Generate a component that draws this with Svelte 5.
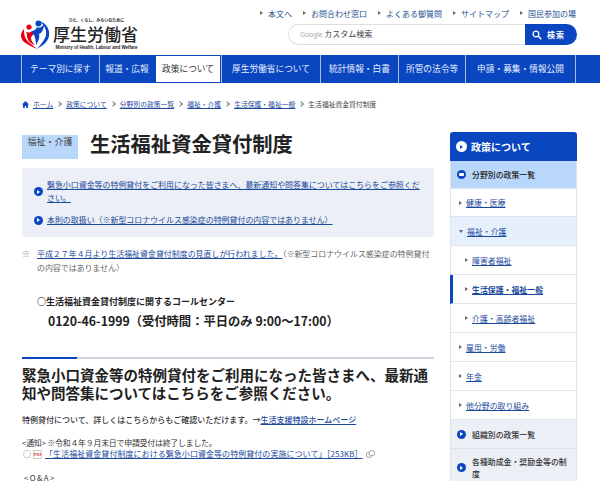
<script>
  const utils = ['本文へ','お問合わせ窓口','よくある御質問','サイトマップ','国民参加の場'];
  const nav = [['テーマ別に探す',78],['報道・広報',55],['政策について',67],['厚生労働省について',99],['統計情報・白書',78],['所管の法令等',67],['申請・募集・情報公開',111]];
  const crumbs = ['政策について','分野別の政策一覧','福祉・介護','生活保護・福祉一般'];
</script>

<div class="page">
  <header class="head">
    <div class="logo">
      <svg class="mark" viewBox="18 15 36 36" width="36" height="36" aria-hidden="true">
        <path d="M24 29 C20 33 20 38 24 42 C28 45 33 47 37 49 C33 45 27 42 25 37 C24 34 24 32 24 29Z" fill="#e60012"/>
        <path d="M26 32 C29 33 32 32 35 30 L35 33 C33 35 31 36 31 38 C31 41 33 43 35 45 C31 44 28 41 27 37 C27 35 27 34 26 32Z" fill="#e60012"/>
        <circle cx="29" cy="27" r="2.600" fill="#e60012"/>
        <path d="M40 21 C47 24 50 30 49 36 C48 42 42 46 37 49 C41 44 45 40 46 35 C47 30 44 25 40 21Z" fill="#0a46c0"/>
        <path d="M31 31 C35 31 36 29 37 27 C39 29 42 27 44 24 C44 29 42 33 39 34 C40 38 38 42 36 45 C36 40 35 35 31 31Z" fill="#0a46c0"/>
        <circle cx="38.500" cy="23.500" r="3" fill="#0a46c0"/>
      </svg>
      <div class="logotext">
        <span class="tagline">ひと、くらし、みらいのために</span>
        <span class="kanji">厚生労働省</span>
        <span class="en">Ministry of Health, Labour and Welfare</span>
      </div>
    </div>
    <div class="tools">
      <ul class="util">
        {#each utils as u}<li><i class="tri small"></i>{u}</li>{/each}
      </ul>
      <div class="search">
        <div class="field"><span class="google">Google</span> カスタム検索</div>
        <div class="btn">
          <svg viewBox="0 0 14 14" width="10" height="10" aria-hidden="true"><circle cx="5.500" cy="5.500" r="4" fill="none" stroke="#fff" stroke-width="1.800"/><path d="M8.500 8.500 L13 13" stroke="#fff" stroke-width="2"/></svg>
          <span>検索</span>
        </div>
      </div>
    </div>
  </header>

  <nav class="nav">
    <ul>
      {#each nav as [t,w]}
        <li class:active={t==='政策について'} style="width:{w}px">{t}</li>
      {/each}
    </ul>
  </nav>

  <div class="crumbs">
    <svg viewBox="0 0 10 10" width="7" height="7" aria-hidden="true"><path d="M5 0 L10 5 H8.500 V10 H6 V7 H4 V10 H1.500 V5 H0Z" fill="#0a46c0"/></svg>
    <a href="#a">ホーム</a>
    {#each crumbs as c}<span class="gt"></span><a href="#a">{c}</a>{/each}
    <span class="gt"></span><span>生活福祉資金貸付制度</span>
  </div>

  <div class="cols">
    <main class="main">
      <div class="titlerow">
        <span class="tag">福祉・介護</span>
        <h1>生活福祉資金貸付制度</h1>
      </div>
      <div class="notice">
        <div class="nrow"><i class="dot"></i><a href="#a">緊急小口資金等の特例貸付をご利用になった皆さまへ、最新通知や問答集についてはこちらをご参照ください。</a></div>
        <div class="nrow"><i class="dot"></i><a href="#a">本則の取扱い（※新型コロナウイルス感染症の特例貸付の内容ではありません）</a></div>
      </div>
      <p class="kome"><span class="mk">※</span><span><a href="#a">平成２７年４月より生活福祉資金貸付制度の見直しが行われました。</a>（※新型コロナウイルス感染症の特例貸付の内容ではありません）</span></p>
      <p class="call1">○生活福祉資金貸付制度に関するコールセンター</p>
      <p class="call2">0120-46-1999（受付時間：平日のみ 9:00～17:00）</p>
      <h2>緊急小口資金等の特例貸付をご利用になった皆さまへ、最新通知や問答集についてはこちらをご参照ください。</h2>
      <p class="body1">特例貸付について、詳しくはこちらからもご確認いただけます。→<a href="#a">生活支援特設ホームページ</a></p>
      <p class="body2">&lt;通知&gt; ※令和４年９月末日で申請受付は終了しました。</p>
      <p class="body3"><span class="circ">○</span><span class="pdf">PDF</span><a href="#a">「生活福祉資金貸付制度における緊急小口資金等の特例貸付の実施について」［253KB］</a>
        <svg viewBox="0 0 10 10" width="9" height="9" aria-hidden="true"><rect x="0.500" y="3" width="6" height="5" rx="1.500" fill="none" stroke="#999"/><rect x="3.500" y="1" width="6" height="5" rx="1.500" fill="#fff" stroke="#999"/></svg></p>
      <p class="body4">&lt;Q&amp;A&gt;</p>
    </main>

    <aside class="side">
      <div class="shead"><i class="dot white"></i>政策について</div>
      <div class="sgroup"><i class="dot down"></i>分野別の政策一覧</div>
      <div class="sitem"><i class="tri"></i><a href="#a">健康・医療</a></div>
      <div class="sitem open"><i class="tri dn"></i><a href="#a">福祉・介護</a></div>
      <div class="sitem sub"><i class="tri"></i><a href="#a">障害者福祉</a></div>
      <div class="sitem sub cur"><i class="tri"></i><a href="#a">生活保護・福祉一般</a></div>
      <div class="sitem sub"><i class="tri"></i><a href="#a">介護・高齢者福祉</a></div>
      <div class="sitem"><i class="tri"></i><a href="#a">雇用・労働</a></div>
      <div class="sitem"><i class="tri"></i><a href="#a">年金</a></div>
      <div class="sitem"><i class="tri"></i><a href="#a">他分野の取り組み</a></div>
      <div class="sgrey"><i class="dot"></i>組織別の政策一覧</div>
      <div class="sgrey two"><i class="dot"></i><span>各種助成金・奨励金等の制度</span></div>
    </aside>
  </div>
</div>

<style>
  :global(body) { margin: 0; background: #fff; overflow: hidden; }
  .page { width: 600px; height: 481px; overflow: hidden; font-family: "Noto Sans CJK JP", "Noto Sans", sans-serif; color: #333; font-size: 8px; }
  a { color: #1a4a9c; text-decoration: underline; }
  ul { list-style: none; margin: 0; padding: 0; }
  p, h1, h2 { margin: 0; }
  i { display: block; flex: none; }

  .head { height: 55px; display: flex; justify-content: space-between; padding: 0 23px 0 18px; box-sizing: border-box; }
  .logo { display: flex; align-items: flex-start; padding-top: 15px; box-sizing: border-box; }
  .logotext { display: flex; flex-direction: column; align-items: center; color: #222; margin-left: -1px; margin-top: 3px; }
  .tagline { font-size: 4px; line-height: 5px; font-weight: 700; }
  .kanji { font-size: 17px; line-height: 21px; font-weight: 500; white-space: nowrap; margin-right: 2px; }
  .en { font-size: 4.500px; line-height: 7px; font-family: "Liberation Sans", sans-serif; font-weight: 700; white-space: nowrap; }
  .tools { display: flex; flex-direction: column; align-items: flex-end; }
  .util { display: flex; gap: 11px; height: 24px; align-items: center; padding: 0 1px 0 0; box-sizing: border-box; color: #25508f; font-size: 8px; white-space: nowrap; }
  .util li { display: flex; align-items: center; gap: 5px; margin-top: 2px; }
  .tri { width: 0; height: 0; border-left: 3px solid #666; border-top: 2px solid transparent; border-bottom: 2px solid transparent; }
  .tri.dn { border-top: 3px solid #666; border-left: 2px solid transparent; border-right: 2px solid transparent; border-bottom: 0; }
  .search { display: flex; width: 289px; height: 21px; }
  .field { flex: 1; border: 1px solid #dcdfe6; border-right: 0; border-radius: 11px 0 0 11px; line-height: 18px; padding-left: 11px; font-size: 8px; color: #444; }
  .google { font-family: "Liberation Sans", sans-serif; font-size: 7px; color: #aaa; }
  .btn { width: 52px; background: #0a46c0; border-radius: 0 11px 11px 0; display: flex; align-items: center; gap: 5px; padding-left: 7px; box-sizing: border-box; color: #fff; font-size: 8px; font-weight: 700; letter-spacing: 1px; }

  .nav { background: #0a46c0; height: 28px; }
  .nav ul { display: flex; height: 100%; padding-left: 21px; }
  .nav li { box-sizing: border-box; border-left: 1px solid #a9bfe8; color: #e8eeff; font-size: 8.700px; line-height: 28px; text-align: center; white-space: nowrap; }
  .nav li:last-child { border-right: 1px solid #a9bfe8; }
  .nav li.active { background: #fff; color: #333; border: 1px solid #0a46c0; border-width: 1px 1px 1px 2px; line-height: 26px; }

  .crumbs { display: flex; align-items: center; gap: 4px; padding: 15px 0 0 22px; height: 12px; font-size: 6.800px; color: #444; white-space: nowrap; }
  .gt { width: 3px; height: 3px; border: solid #777; border-width: 1px 1px 0 0; transform: rotate(45deg); margin: 0 1px 0 0; }

  .cols { display: flex; padding: 25px 0 0 22px; gap: 16px; }
  .main { width: 412px; flex: none; }
  .titlerow { display: flex; align-items: flex-start; gap: 12px; height: 33px; }
  .tag { width: 56px; height: 24px; background: #b9d6fb; font-size: 9px; line-height: 13px; text-align: center; color: #444; }
  h1 { font-size: 20.300px; line-height: 22px; margin-top: -3px; font-weight: 700; color: #222; }
  .notice { background: #eceff5; border-radius: 3px; height: 69px; box-sizing: border-box; padding: 11px 12px 0 12px; font-size: 7.950px; line-height: 12.500px; }
  .nrow { display: flex; align-items: center; gap: 4px; margin-bottom: 11px; }
  .nrow:last-child { margin-top: -1px; }
  .dot { width: 9px; height: 9px; border-radius: 50%; background: #0a46c0; position: relative; }
  .dot::after { content: ""; position: absolute; left: 3px; top: 2.500px; width: 3px; height: 4px; border-left: 3px solid #fff; border-top: 2px solid transparent; border-bottom: 2px solid transparent; box-sizing: border-box; }
  .dot.white { background: #fff; width: 11px; height: 11px; }
  .dot.white::after { border-left-color: #0a46c0; left: 4px; top: 3.500px; }
  .dot.down::after { border: 0; width: 5px; height: 3px; background: #fff; left: 2px; top: 3px; border-radius: 1px; }
  .kome { display: flex; margin-top: 10px; font-size: 7.950px; line-height: 13.500px; color: #666; }
  .mk { width: 15px; flex: none; color: #7a8fb0; }
  .call1 { margin: 20px 0 0 15px; font-size: 9px; font-weight: 700; line-height: 15px; color: #222; }
  .call2 { margin: 2px 0 0 26px; font-size: 12.300px; font-weight: 700; line-height: 20px; color: #222; }
  h2 { margin-top: 26px; padding-top: 7px; border-top: 2px solid; border-image: linear-gradient(90deg, #0a46c0 56px, #cfd3dc 56px) 1; font-size: 14.500px; line-height: 18px; font-weight: 700; color: #222; }
  .body1 { margin-top: 11px; line-height: 14px; font-size: 8px; color: #333; font-weight: 500; }
  .body2 { margin-top: 10px; line-height: 11px; font-size: 7.900px; color: #333; letter-spacing: -0.200px; }
  .body3 { line-height: 12px; font-size: 8px; display: flex; align-items: center; white-space: nowrap; letter-spacing: 0.050px; }
  .circ { width: 10px; flex: none; color: #555; padding-left: 1px; box-sizing: border-box; }
  .pdf { width: 9px; height: 9px; border: 1px solid #ccc; box-sizing: border-box; font: 700 4px/7px "Liberation Sans", sans-serif; color: #d33; text-align: center; margin: 0 3px 0 1px; overflow: hidden; }
  .body3 svg { margin-left: 3px; }
  .body4 { margin-top: 12px; line-height: 12px; font-size: 7.900px; margin-left: 2px; letter-spacing: 1.400px; }

  .side { width: 127px; flex: none; margin-top: -3px; font-size: 8px; }
  .side > div { display: flex; align-items: center; box-sizing: border-box; border: 1px solid #dfe3ea; border-width: 0 1px 1px 1px; }
  .shead { height: 29px; background: #0a46c0; color: #fff; font-size: 10px; font-weight: 700; gap: 4px; padding-left: 6px; border: 0 !important; border-radius: 3px 3px 0 0; }
  .sgroup { height: 28px; background: #b9d6fb; padding-left: 6px; gap: 6px; font-size: 7.900px; font-weight: 500; color: #222; }
  .sitem { height: 29px; gap: 4px; padding-left: 8px; font-size: 7.900px; }
  .sgroup + .sitem { height: 28px; }
  .sitem.open { background: #e6f0fd; }
  .sitem.sub { padding-left: 14px; }
  .sitem.cur { border-left: 3px solid #0a46c0; padding-left: 12px; font-weight: 700; }
  .sgrey { background: #eceff5; min-height: 29px; padding-left: 6px; gap: 6px; font-size: 7.900px; font-weight: 500; color: #333; }
  .sgrey.two { height: 38px; line-height: 12px; padding-right: 8px; }
</style>
